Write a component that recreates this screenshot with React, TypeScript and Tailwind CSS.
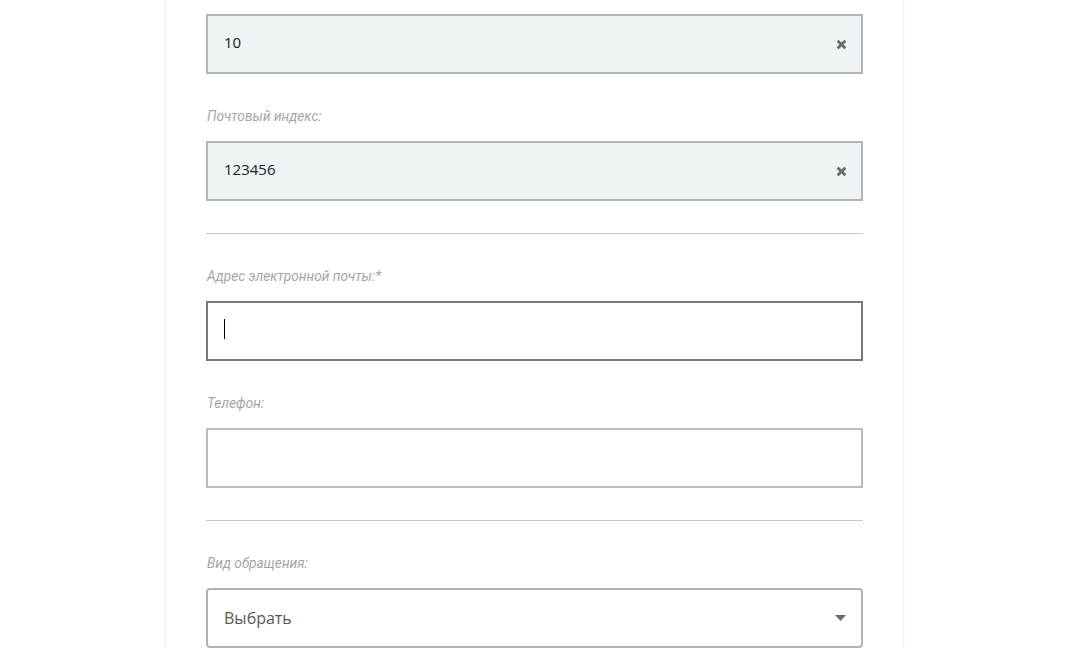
import React from "react";

const XIcon = () => (
  <svg width="11" height="11" viewBox="0 0 10 10" className="shrink-0">
    <path d="M1.5 1.5 L8.5 8.5 M8.5 1.5 L1.5 8.5" stroke="#6b6b6b" strokeWidth="2.6" strokeLinecap="butt" />
  </svg>
);

const Label = ({ children }: { children: React.ReactNode }) => (
  <div className="h-5 leading-5 text-[13.7px] italic text-[#a6a6a6] mb-[15px] pl-px font-['Roboto']">
    {children}
  </div>
);

export default function App() {
  return (
    <div className="min-h-[648px] bg-white overflow-hidden" style={{ fontFamily: '"Open Sans", sans-serif' }}>
      <div className="ml-[165px] w-[739px] min-h-[648px] border-x border-[#f1f1f1] shadow-[0_0_3px_rgba(0,0,0,0.04)] pt-[14px] pl-[40px] pr-[40px]">
        <div className="h-[60px] border-2 border-[#b5b5b5] bg-[#eef3f6] flex items-center pl-4 pr-[14px] mb-8">
          <span className="flex-1 text-[15px] text-[#222] -mt-[3px]">10</span>
          <XIcon />
        </div>

        <Label>Почтовый индекс:</Label>
        <div className="h-[60px] border-2 border-[#b5b5b5] bg-[#eef3f6] flex items-center pl-4 pr-[14px] mb-8">
          <span className="flex-1 text-[15px] text-[#222] -mt-[3px]">123456</span>
          <XIcon />
        </div>

        <div className="h-px bg-[#c8c8c8] mb-8" />

        <Label>Адрес электронной почты:*</Label>
        <div className="h-[60px] border-2 border-[#787878] bg-white flex items-center pl-4 pr-5 mb-8">
          <span className="w-px h-5 bg-black -mt-[4px]" />
        </div>

        <Label>Телефон:</Label>
        <div className="h-[60px] border-2 border-[#bcbcbc] bg-white mb-8" />

        <div className="h-px bg-[#c8c8c8] mb-8" />

        <Label>Вид обращения:</Label>
        <div className="h-[60px] border-2 border-[#b3b3b3] rounded-[4px] bg-white flex items-center pl-4 pr-[15px]">
          <span className="flex-1 text-[16px] text-[#585858]">Выбрать</span>
          <svg width="11" height="6" viewBox="0 0 11 6">
            <path d="M0 0 L11 0 L5.5 6 Z" fill="#6b6b6b" />
          </svg>
        </div>
      </div>
    </div>
  );
}
